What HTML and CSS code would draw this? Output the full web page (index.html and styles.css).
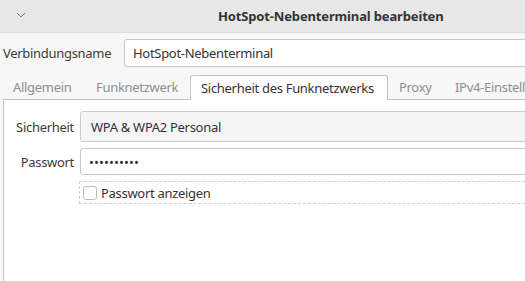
FILE: index.html
```html
<!DOCTYPE html>
<html lang="de">
<head>
<meta charset="utf-8">
<title>HotSpot-Nebenterminal bearbeiten</title>
<link rel="stylesheet" href="styles.css">
</head>
<body>
<div class="window">
  <header class="titlebar">
    <span class="chevron"><svg width="10" height="6" viewBox="0 0 10 6"><path d="M1 1 L5 5 L9 1" fill="none" stroke="#777" stroke-width="1"/></svg></span>
    <span class="title">HotSpot-Nebenterminal bearbeiten</span>
  </header>
  <div class="namerow">
    <label class="namelabel">Verbindungsname</label>
    <div class="entry nameentry">HotSpot-Nebenterminal</div>
  </div>
  <div class="tabs">
    <span class="tab t1">Allgemein</span>
    <span class="tab t2">Funknetzwerk</span>
    <span class="tab active">Sicherheit des Funknetzwerks</span>
    <span class="tab t4">Proxy</span>
    <span class="tab t5">IPv4-Einstellungen</span>
  </div>
  <div class="page">
    <div class="grid">
      <label class="flabel">Sicherheit</label>
      <div class="combo">WPA &amp; WPA2 Personal</div>
      <label class="flabel">Passwort</label>
      <div class="entry pwentry">••••••••••</div>
      <span></span>
      <div class="check"><span class="box"></span><span>Passwort anzeigen</span></div>
    </div>
  </div>
</div>
</body>
</html>
```
FILE: styles.css
```css
* { box-sizing: border-box; }
html, body { margin: 0; padding: 0; }
body {
  width: 525px; height: 281px; overflow: hidden;
  font-family: "Noto Sans", "DejaVu Sans", sans-serif;
  font-size: 13px; color: #3c3c3c;
  background: #f7f7f7;
}
.window { width: 525px; height: 281px; display: flex; flex-direction: column; overflow: hidden; }
.titlebar {
  height: 33px; flex: none; background: #e7e7e7;
  display: flex; align-items: center; position: relative;
  border-bottom: 1px solid #dedede;
}
.chevron { position: absolute; left: 16px; top: 12px; display: flex; }
.title { margin-left: 218px; font-weight: bold; color: #333; font-size: 13px; letter-spacing: -0.15px; }
.namerow { display: flex; align-items: center; padding: 4px 0 0 3px; height: 36px; flex: none; }
.namelabel { width: 121px; flex: none; letter-spacing: -0.3px; }
.entry {
  background: #fff; border: 1px solid #c8c8c8; border-radius: 3px;
  display: flex; align-items: center; padding-left: 8px; color: #333;
}
.nameentry { height: 28px; flex: 1; margin-right: -5px; letter-spacing: -0.3px; }
.tabs { display: flex; align-items: flex-end; height: 30px; flex: none; padding-left: 3px; position: relative; z-index: 1; }
.tab { flex: none; color: #8e8e8e; height: 25px; display: flex; align-items: center; white-space: nowrap; letter-spacing: -0.3px; }
.t1 { padding-left: 10px; width: 93px; }
.t2 { width: 94px; }
.tab.active {
  color: #333; background: #fff; border: 1px solid #c4c4c4; border-bottom: none;
  padding: 0 10px; width: 198px; height: 25px; border-top-left-radius: 3px; border-top-right-radius: 3px;
  margin-bottom: -1px;
}
.t4 { padding-left: 11px; width: 67px; }
.page {
  flex: 1; background: #fff; border-top: 1px solid #c4c4c4; border-left: 1px solid #c4c4c4;
  margin-left: 3px; padding: 11px 0 0 0;
}
.grid { display: grid; grid-template-columns: 76px 1fr; row-gap: 6px; align-items: center; margin-right: -5px; }
.flabel { text-align: right; padding-right: 6px; letter-spacing: -0.3px; }
.combo {
  height: 31px; background: #f5f5f5; border: 1px solid #cdcdcd; border-radius: 3px;
  display: flex; align-items: center; padding-left: 10px; color: #333; letter-spacing: -0.3px;
}
.pwentry { height: 27px; font-size: 13px; letter-spacing: 0.1px; }
.check {
  height: 23px; border: 1px dashed #cfcfcf; margin-left: -1px; margin-top: 0;
  display: flex; align-items: center; padding-left: 3px; gap: 4px; color: #333; letter-spacing: -0.3px;
}
.box { width: 14px; height: 14px; border: 1px solid #bdbdbd; border-radius: 3px; background: #fff; }
```
